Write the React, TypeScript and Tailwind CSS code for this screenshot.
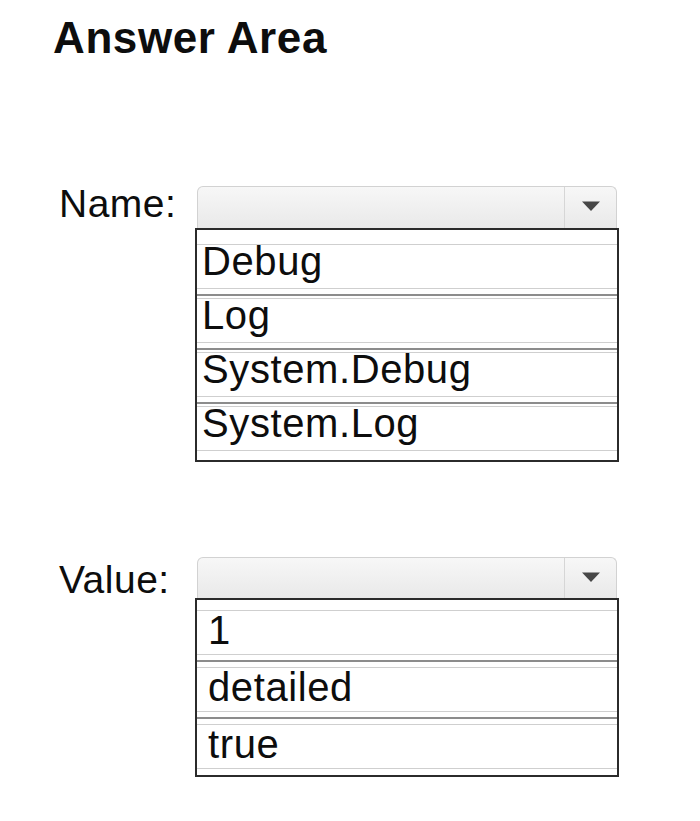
import React from "react"

interface ListBoxProps {
  options: string[]
  variant: "name" | "value"
}

// Closed select bar with the arrow on the right
const SelectBar: React.FC<{ height: string }> = ({ height }) => (
  <div
    className={`mx-[2px] flex rounded-t-[6px] border border-b-0 border-[#d2d2d2] bg-linear-to-b from-[#f7f7f7] to-[#e9e9e9] ${height}`}
  >
    <div className="flex-1" />
    <div className="flex w-[52px] justify-center border-l border-[#d6d6d6] pt-[14px]">
      <svg width="18" height="10" viewBox="0 0 18 10">
        <path d="M0 0.5h18L9 10z" fill="#474747" />
      </svg>
    </div>
  </div>
)

// Opened list under the select bar
const ListBox: React.FC<ListBoxProps> = ({ options, variant }) => {
  const isName = variant === "name"
  return (
    <div className="border-2 border-[#2b2b2b] bg-white">
      <div className={isName ? "h-[14px]" : "h-[10px]"} />
      {options.map((opt, i) => (
        <React.Fragment key={opt}>
          {i > 0 && (
            <div className={isName ? "pt-[5px] pb-[2px]" : "pt-[5px] pb-[5px]"}>
              <div className="h-[2px] bg-[#8c8c8c]" />
            </div>
          )}
          <div
            className={`h-[45px] border-y border-[#cfcfcf] text-[40px] tracking-[0.6px] text-[#0d0d0d] ${
              isName ? "pl-[5px] leading-[33px]" : "pl-[11px] leading-[38px]"
            }`}
          >
            {opt}
          </div>
        </React.Fragment>
      ))}
      <div className={isName ? "h-[9px]" : "h-[6px]"} />
    </div>
  )
}

export default function App() {
  return (
    <div className="h-[821px] w-full bg-white font-['Liberation_Sans',Arial,sans-serif] text-[#0d0d0d]">
      <h1 className="pl-[53px] pt-[16px] text-[44px] font-bold leading-none tracking-[0.6px]">Answer Area</h1>

      {/* Name */}
      <div className="mt-[126px] flex pl-[59px]">
        <div className="-mt-[2px] w-[136px] shrink-0 text-[39px] leading-none tracking-[0.5px]">Name:</div>
        <div className="w-[424px]">
          <SelectBar height="h-[42px]" />
          <ListBox variant="name" options={["Debug", "Log", "System.Debug", "System.Log"]} />
        </div>
      </div>

      {/* Value */}
      <div className="mt-[95px] flex pl-[59px]">
        <div className="mt-[3px] w-[136px] shrink-0 text-[39px] leading-none tracking-[0.5px]">Value:</div>
        <div className="w-[424px]">
          <SelectBar height="h-[41px]" />
          <ListBox variant="value" options={["1", "detailed", "true"]} />
        </div>
      </div>
    </div>
  )
}
